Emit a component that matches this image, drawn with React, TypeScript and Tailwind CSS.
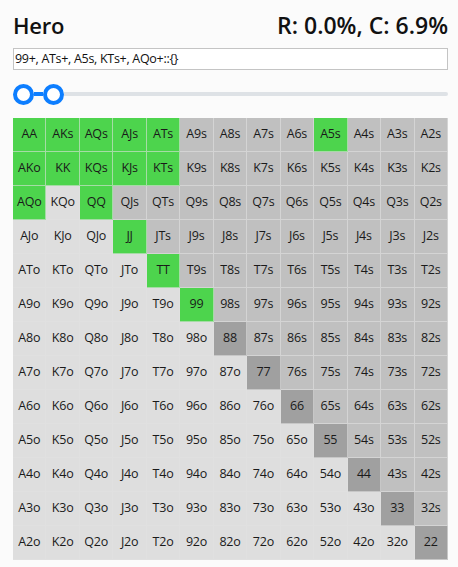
import React from "react";

const RANKS = ["A", "K", "Q", "J", "T", "9", "8", "7", "6", "5", "4", "3", "2"];

const SELECTED = new Set([
  "AA", "KK", "QQ", "JJ", "TT", "99",
  "AKs", "AQs", "AJs", "ATs", "A5s",
  "KQs", "KJs", "KTs",
  "AKo", "AQo",
]);

function handName(i: number, j: number) {
  if (i === j) return RANKS[i] + RANKS[j];
  if (j > i) return RANKS[i] + RANKS[j] + "s";
  return RANKS[j] + RANKS[i] + "o";
}

function cellClass(i: number, j: number, name: string) {
  if (SELECTED.has(name)) return "bg-[#4dd44d]";
  if (i === j) return "bg-[#a0a0a0]";
  if (j > i) return "bg-[#c0c0c0]";
  return "bg-[#dedede]";
}

export default function App() {
  return (
    <div
      className="min-h-screen bg-[#fbfbfb] pl-[13px] pr-[10px] pt-[12px] text-[#111]"
      style={{ fontFamily: '"Open Sans", "Noto Sans", sans-serif' }}
    >
      {/* Header */}
      <div className="flex items-center justify-between h-[26px]">
        <span className="text-[22px] font-semibold leading-none tracking-[-0.2px]">Hero</span>
        <span className="text-[23px] font-semibold leading-none tracking-[0px]">
          R: 0.0%, C: 6.9%
        </span>
      </div>

      {/* Range input */}
      <div className="mt-[10px] h-[22px] border border-[#c4c4c4] bg-white flex items-center px-[1px]">
        <span className="text-[12.5px] leading-none tracking-[-0.3px]">
          99+, ATs+, A5s, KTs+, AQo+::{"{}"}
        </span>
      </div>

      {/* Slider */}
      <div className="h-[48px] flex items-center">
        <div className="w-[21px] h-[21px] shrink-0 rounded-full border-[4px] border-[#0d7eff] bg-white" />
        <div className="w-[9px] h-[4px] shrink-0 bg-[#0d7eff]" />
        <div className="w-[21px] h-[21px] shrink-0 rounded-full border-[4px] border-[#0d7eff] bg-white" />
        <div className="flex-1 h-[4px] rounded-r bg-[#dee2e6]" />
      </div>

      {/* Hand grid */}
      <div className="grid grid-cols-13">
        {RANKS.map((_, i) =>
          RANKS.map((_, j) => {
            const name = handName(i, j);
            return (
              <div
                key={name}
                className={`h-[34px] flex items-center justify-center border-r border-b border-[#e1e1e199] text-[12.5px] text-[#1a1a1a] tracking-[-0.2px] ${cellClass(i, j, name)}`}
              >
                {name}
              </div>
            );
          })
        )}
      </div>
    </div>
  );
}
